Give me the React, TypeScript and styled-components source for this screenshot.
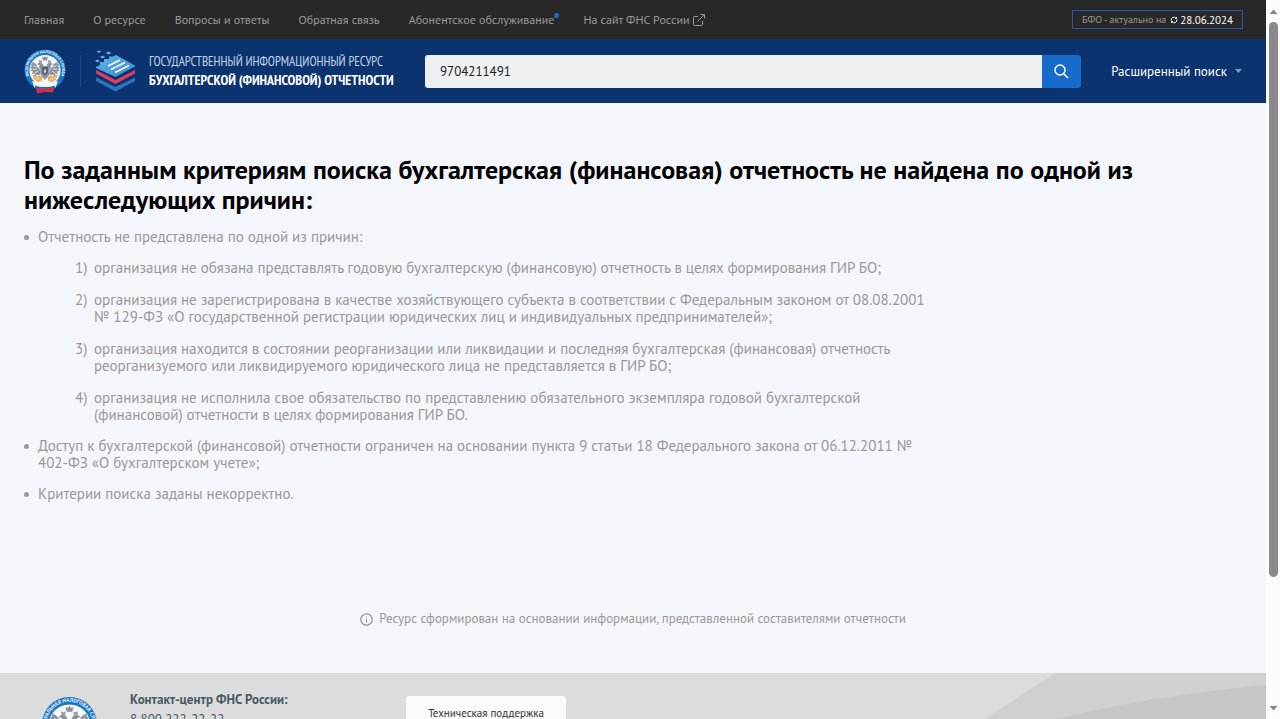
import React from "react";
import styled, { createGlobalStyle } from "styled-components";

const GlobalStyle = createGlobalStyle`
  *, *::before, *::after { box-sizing: border-box; }
  body {
    margin: 0;
    background: #f3f6fb;
    font-family: "PT Sans", "Noto Sans", sans-serif;
    font-size: 13px;
    color: #000;
  }
  h1, p, ul, ol { margin: 0; padding: 0; }
  ul, ol { list-style: none; }
  a { color: inherit; text-decoration: none; }
  button, input { font: inherit; border: 0; }
`;

const Window = styled.div`
  display: flex;
  height: 100vh;
  overflow: hidden;
`;

const Page = styled.div`
  flex: 1;
  min-width: 0;
  overflow: hidden;
`;

const TopBar = styled.div`
  display: flex;
  align-items: center;
  justify-content: space-between;
  height: 39px;
  padding: 0 23px 0 24px;
  background: #282828;
  color: #9a9a9a;
  font-size: 12px;
`;

const TopNav = styled.nav`
  display: flex;
  gap: 29px;
`;

const TopLink = styled.a`
  display: flex;
  position: relative;
  gap: 4px;
  align-items: center;
  white-space: nowrap;
`;

const NewDot = styled.span`
  position: absolute;
  top: 1px;
  right: -5px;
  width: 5px;
  height: 5px;
  border-radius: 50%;
  background: #1c6fd0;
`;

const Actuality = styled.div`
  display: flex;
  align-items: center;
  gap: 4px;
  height: 19px;
  padding: 0 9px;
  border: 1px solid #2a55ad;
  font-size: 10px;
  white-space: nowrap;
`;

const ActualDate = styled.time`
  display: flex;
  align-items: center;
  gap: 2px;
  color: #fff;
  font-size: 11px;
`;

const Header = styled.header`
  display: flex;
  align-items: center;
  height: 64px;
  padding: 0 24px;
  background: #0a3370;
  color: #fff;
`;

const Brand = styled.a`
  display: flex;
  align-items: center;
  flex: none;
  width: 401px;
`;

const Divider = styled.span`
  width: 1px;
  height: 32px;
  margin: 0 14px;
  background: #24497f;
`;

const BrandName = styled.span`
  display: grid;
  margin-left: 13px;
  font-family: "PT Sans Narrow", "Roboto Condensed", "PT Sans", sans-serif;
  white-space: nowrap;
`;

const BrandLine = styled.span<{ $strong?: boolean }>`
  font-size: ${(p) => (p.$strong ? 14 : 13)}px;
  line-height: 18px;
  font-weight: ${(p) => (p.$strong ? 700 : 400)};
  color: ${(p) => (p.$strong ? "#fff" : "#c6d2e4")};
`;

const SearchForm = styled.form`
  display: flex;
  flex: 1;
  height: 33px;
  border-radius: 3px;
  overflow: hidden;
`;

const SearchInput = styled.input`
  flex: 1;
  min-width: 0;
  padding: 0 15px;
  background: #eeeff0;
  color: #222;
  outline: 0;
`;

const SearchButton = styled.button`
  display: grid;
  place-items: center;
  width: 39px;
  padding: 0;
  background: #166bcb;
  color: #fff;
`;

const AdvancedButton = styled.button`
  display: flex;
  align-items: center;
  gap: 8px;
  margin-left: 30px;
  padding: 0;
  background: none;
  color: #fff;
  white-space: nowrap;
`;

const Main = styled.main`
  padding: 52px 24px 0;
`;

const Title = styled.h1`
  font-size: 26px;
  line-height: 30px;
  font-weight: 700;
`;

const Reasons = styled.ul`
  display: grid;
  gap: 14px;
  max-width: 908px;
  margin-top: 13px;
  color: #999;
  font-size: 15px;
  line-height: 17px;
`;

const Reason = styled.li`
  display: grid;
  grid-template-columns: 14px 1fr;
  &::before {
    content: "";
    width: 5px;
    height: 5px;
    margin-top: 7px;
    border-radius: 50%;
    background: #999;
  }
`;

const SubReasons = styled.ol`
  display: grid;
  gap: 15px;
  margin-top: 14px;
  padding-left: 37px;
  counter-reset: reason;
`;

const SubReason = styled.li`
  display: grid;
  grid-template-columns: 19px 1fr;
  counter-increment: reason;
  &::before {
    content: counter(reason) ")";
  }
`;

const Notice = styled.p`
  display: flex;
  align-items: center;
  justify-content: center;
  gap: 6px;
  margin-top: 108px;
  padding-bottom: 45px;
  color: #999;
  line-height: 18px;
`;

const Footer = styled.footer`
  position: relative;
  display: flex;
  align-items: flex-start;
  height: 240px;
  padding: 17px 24px 0 41px;
  background: #dcdcdc;
  color: #455a64;
`;

const FooterWaves = styled.svg`
  position: absolute;
  top: 0;
  right: 0;
  overflow: visible;
`;

const FooterEmblem = styled.div`
  flex: none;
  width: 89px;
  padding-top: 5px;
`;

const Contacts = styled.div`
  display: grid;
  width: 276px;
  line-height: 20px;
`;

const SupportButton = styled.button`
  width: 160px;
  height: 33px;
  margin-top: 6px;
  border-radius: 3px;
  background: #fafafa;
  color: #333;
  font-size: 11px;
`;

const ScrollTrack = styled.div`
  display: flex;
  flex-direction: column;
  align-items: center;
  flex: none;
  width: 14px;
  padding: 9px 0 8px;
  background: #fcfcfc;
`;

const ScrollThumb = styled.div`
  flex: 0 0 79%;
  width: 9px;
  margin: 8px 0 auto;
  border-radius: 5px;
  background: #8a8a8a;
`;

function ScrollArrow({ down = false }: { down?: boolean }) {
  return (
    <svg width="9" height="5" viewBox="0 0 9 5" aria-hidden="true">
      <path d={down ? "M.5 0h8L4.500 4.500z" : "M.5 5h8L4.500.5z"} fill="#858585" />
    </svg>
  );
}

function Emblem({ width, id }: { width: number; id: string }) {
  return (
    <svg width={width} height={Math.round((width * 46) / 42)} viewBox="0 0 84 92" aria-hidden="true">
      <defs>
        <path id={id} d="M22 71.500A34 34 0 1 1 62 71.500" />
      </defs>
      <circle cx="42" cy="44" r="41" fill="#1b78c2" />
      <text fontSize="8" fontWeight="700" fill="#e6f1fa">
        <textPath href={`#${id}`} startOffset="50%" textAnchor="middle">ФЕДЕРАЛЬНАЯ НАЛОГОВАЯ СЛУЖБА</textPath>
      </text>
      <circle cx="42" cy="45" r="31" fill="#f6f7f9" />
      <g fill="#8a929f">
        <path d="M42 16l2 3 4-1-2 7h-8l-2-7 4 1z" />
        <path d="M30 24l3 2 3-2v5h-6zM48 24l3 2 3-2v5h-6z" />
        <path d="M26 33l4-4c4-1 8 2 9 7h6c1-5 5-8 9-7l4 4-5 1 1 5-4 6 2 7-10 12-10-12 2-7-4-6 1-5z" />
        <path d="M27 38C26 33 21 28 15 28l2 4-4 1 3 4-4 2 4 3-3 4 5 1-2 5 6-1 0 5 5-3 4 2 3-9zM57 38c1-5 6-10 12-10l-2 4 4 1-3 4 4 2-4 3 3 4-5 1 2 5-6-1 0 5-5-3-4 2-3-9z" />
      </g>
      <path d="M19 35l7 3M18 43l8-1M22 50l6-4M65 35l-7 3M66 43l-8-1M62 50l-6-4" stroke="#f6f7f9" strokeWidth="1.500" />
      <path d="M36 38h12v9c0 4-3 6-6 8-3-2-6-4-6-8z" fill="#59616f" />
      <path d="M42 41l3 5-3 6-3-6z" fill="#c9ced5" />
      <path d="M17 54l6-1 4 4 5-2 5 4-2 7-7 2-8-5zM67 54l-6-1-4 4-5-2-5 4 2 7 7 2 8-5z" fill="#dfae5c" />
      <path d="M20 58l9 6M25 57l8 7M64 58l-9 6M59 57l-8 7" stroke="#f6e6c4" strokeWidth="1.500" />
      <path d="M16 66c8 5 44 5 52 0l-5 13H21z" fill="#f6f7f9" />
      <path d="M22 75c11 4 29 4 40 0l-1 7c-11-3-27-3-38 0z" fill="#1b69b1" />
      <path d="M24 80c11 3 25 2 36-1l-2 10c-10-2-22-1-32 2z" fill="#df2c38" />
    </svg>
  );
}

function StackLogo() {
  return (
    <svg width="41" height="43" viewBox="0 0 41 43" aria-hidden="true">
      <defs>
        <linearGradient id="tile" x1="0" x2="1" y1="0" y2="1">
          <stop offset="0" stopColor="#5fb8ea" />
          <stop offset="1" stopColor="#3a86cf" />
        </linearGradient>
      </defs>
      <path d="M1 27.500l19.500 9.500L40 27.500v3.500L20.500 41.500 1 31z" fill="#2f74c0" />
      <path d="M1 20l19.500 10L40 20v3.500L20.500 34 1 23.500z" fill="#e23d60" />
      <path d="M1 17l4-2v-3h4v-3h5V6.500h4L21 5l19 10.500v1L20.500 27 1 18z" fill="url(#tile)" />
      <path d="M13 16l12-6M16 19.500l14-7M20 22.500l14-7" stroke="#fff" strokeWidth="1.500" />
      <path d="M1.500 1.500l2.500-1 2.500 1-2.500 1.500zM10.500 3l3-1.500 3 1.500-3 1.500zM5 7l2.500-1.500 3 1.500-3 1.500zM0 11l2.500-1.500L5 11l-2.500 1.500z" fill="#5eaee6" />
    </svg>
  );
}

function ExternalIcon() {
  return (
    <svg width="12" height="12" viewBox="0 0 12 12" fill="none" stroke="currentColor" aria-hidden="true">
      <path d="M5 2.500H1.500a1 1 0 0 0-1 1v7a1 1 0 0 0 1 1h7a1 1 0 0 0 1-1V7M7.500.5h4v4M11.500.5L4.500 7.500" />
    </svg>
  );
}

function RefreshIcon() {
  return (
    <svg width="8" height="8" viewBox="0 0 8 8" fill="none" stroke="currentColor" aria-hidden="true">
      <path d="M1.200 4.500A2.700 2.700 0 0 1 6 2.300M6.800 3.500A2.700 2.700 0 0 1 2 5.700M6.500 1.200v1.300H5M1.500 6.800V5.500H3" />
    </svg>
  );
}

function SearchIcon() {
  return (
    <svg width="15" height="15" viewBox="0 0 15 15" fill="none" stroke="currentColor" strokeWidth="1.500" aria-hidden="true">
      <circle cx="6" cy="6" r="5" />
      <path d="M9.500 9.500l4.500 4.500" />
    </svg>
  );
}

function InfoIcon() {
  return (
    <svg width="13" height="13" viewBox="0 0 13 13" fill="none" stroke="currentColor" aria-hidden="true">
      <circle cx="6.500" cy="6.500" r="5.700" strokeWidth="1.300" />
      <path d="M6.500 5.700v3.800M6.500 3.500v1.200" />
    </svg>
  );
}

const navItems = ["Главная", "О ресурсе", "Вопросы и ответы", "Обратная связь"];

const subReasons = [
  "организация не обязана представлять годовую бухгалтерскую (финансовую) отчетность в целях формирования ГИР БО;",
  "организация не зарегистрирована в качестве хозяйствующего субъекта в соответствии с Федеральным законом от 08.08.2001 № 129-ФЗ «О государственной регистрации юридических лиц и индивидуальных предпринимателей»;",
  "организация находится в состоянии реорганизации или ликвидации и последняя бухгалтерская (финансовая) отчетность реорганизуемого или ликвидируемого юридического лица не представляется в ГИР БО;",
  "организация не исполнила свое обязательство по представлению обязательного экземпляра годовой бухгалтерской (финансовой) отчетности в целях формирования ГИР БО.",
];

export default function App() {
  return (
    <Window>
      <GlobalStyle />
      <Page>
        <TopBar>
          <TopNav>
            {navItems.map((item) => (
              <TopLink key={item} href="#">{item}</TopLink>
            ))}
            <TopLink href="#">Абонентское обслуживание<NewDot /></TopLink>
            <TopLink href="#">На сайт ФНС России<ExternalIcon /></TopLink>
          </TopNav>
          <Actuality>
            БФО - актуально на
            <ActualDate dateTime="2024-06-28"><RefreshIcon />28.06.2024</ActualDate>
          </Actuality>
        </TopBar>
        <Header>
          <Brand href="#">
            <Emblem width={42} id="seal-header" />
            <Divider />
            <StackLogo />
            <BrandName>
              <BrandLine>ГОСУДАРСТВЕННЫЙ ИНФОРМАЦИОННЫЙ РЕСУРС</BrandLine>
              <BrandLine $strong>БУХГАЛТЕРСКОЙ (ФИНАНСОВОЙ) ОТЧЕТНОСТИ</BrandLine>
            </BrandName>
          </Brand>
          <SearchForm role="search" onSubmit={(e) => e.preventDefault()}>
            <SearchInput type="text" aria-label="Поиск" defaultValue="9704211491" />
            <SearchButton type="submit" aria-label="Найти"><SearchIcon /></SearchButton>
          </SearchForm>
          <AdvancedButton type="button">
            Расширенный поиск
            <svg width="7" height="4" viewBox="0 0 7 4" aria-hidden="true">
              <path d="M0 0h7L3.500 4z" fill="#7d9cc4" />
            </svg>
          </AdvancedButton>
        </Header>
        <Main>
          <Title>
            По заданным критериям поиска бухгалтерская (финансовая) отчетность не найдена по одной из нижеследующих причин:
          </Title>
          <Reasons>
            <Reason>
              <div>
                Отчетность не представлена по одной из причин:
                <SubReasons>
                  {subReasons.map((text) => (
                    <SubReason key={text}>{text}</SubReason>
                  ))}
                </SubReasons>
              </div>
            </Reason>
            <Reason>
              Доступ к бухгалтерской (финансовой) отчетности ограничен на основании пункта 9 статьи 18 Федерального закона от 06.12.2011 № 402-ФЗ «О бухгалтерском учете»;
            </Reason>
            <Reason>Критерии поиска заданы некорректно.</Reason>
          </Reasons>
          <Notice>
            <InfoIcon />
            Ресурс сформирован на основании информации, представленной составителями отчетности
          </Notice>
        </Main>
        <Footer>
          <FooterWaves width="282" height="240" viewBox="0 0 282 240" aria-hidden="true">
            <path d="M72 0H282V240H-150Q-60 90 2 46Q36 22 72 0z" fill="#d0d0d2" />
            <path d="M282 12Q160 24 73 46Q-10 70-80 240H282z" fill="#c6c6c8" />
          </FooterWaves>
          <FooterEmblem><Emblem width={57} id="seal-footer" /></FooterEmblem>
          <Contacts>
            <strong>Контакт-центр ФНС России:</strong>
            <a href="tel:88002222222">8 800 222-22-22</a>
          </Contacts>
          <SupportButton type="button">Техническая поддержка</SupportButton>
        </Footer>
      </Page>
      <ScrollTrack aria-hidden="true">
        <ScrollArrow />
        <ScrollThumb />
        <ScrollArrow down />
      </ScrollTrack>
    </Window>
  );
}
